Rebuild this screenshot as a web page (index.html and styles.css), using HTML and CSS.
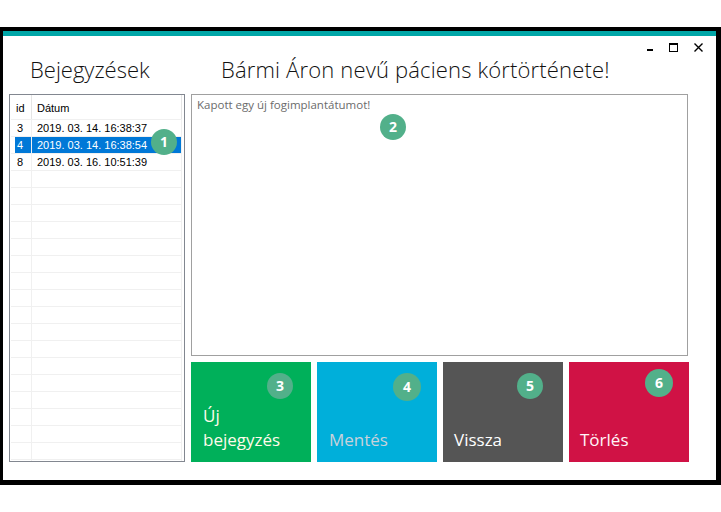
FILE: index.html
```html
<!DOCTYPE html>
<html lang="hu">
<head>
<meta charset="utf-8">
<title>Kórtörténet</title>
<link rel="stylesheet" href="styles.css">
</head>
<body>
<div class="window">
  <div class="stripe"></div>
  <div class="titlebar">
    <span class="ctl ctl-min"></span>
    <span class="ctl ctl-max"></span>
    <svg class="ctl ctl-close" width="9" height="9" viewBox="0 0 9 9"><path d="M0.5 0.5 L8.5 8.5 M8.5 0.5 L0.5 8.5" stroke="#000" stroke-width="1.4" fill="none"/></svg>
  </div>
  <div class="headings">
    <h1 class="heading heading-left">Bejegyzések</h1>
    <h1 class="heading heading-right">Bármi Áron nevű páciens kórtörténete!</h1>
  </div>
  <div class="main">
    <div class="list">
      <div class="row row-head"><div class="c-id">id</div><div class="c-date">Dátum</div></div>
      <div class="row"><div class="c-id">3</div><div class="c-date">2019. 03. 14. 16:38:37</div></div>
      <div class="row row-sel"><div class="c-id">4</div><div class="c-date">2019. 03. 14. 16:38:54</div></div>
      <div class="row"><div class="c-id">8</div><div class="c-date">2019. 03. 16. 10:51:39</div></div>
      <div class="row"><div class="c-id"></div><div class="c-date"></div></div>
      <div class="row"><div class="c-id"></div><div class="c-date"></div></div>
      <div class="row"><div class="c-id"></div><div class="c-date"></div></div>
      <div class="row"><div class="c-id"></div><div class="c-date"></div></div>
      <div class="row"><div class="c-id"></div><div class="c-date"></div></div>
      <div class="row"><div class="c-id"></div><div class="c-date"></div></div>
      <div class="row"><div class="c-id"></div><div class="c-date"></div></div>
      <div class="row"><div class="c-id"></div><div class="c-date"></div></div>
      <div class="row"><div class="c-id"></div><div class="c-date"></div></div>
      <div class="row"><div class="c-id"></div><div class="c-date"></div></div>
      <div class="row"><div class="c-id"></div><div class="c-date"></div></div>
      <div class="row"><div class="c-id"></div><div class="c-date"></div></div>
      <div class="row"><div class="c-id"></div><div class="c-date"></div></div>
      <div class="row"><div class="c-id"></div><div class="c-date"></div></div>
      <div class="row"><div class="c-id"></div><div class="c-date"></div></div>
      <div class="row"><div class="c-id"></div><div class="c-date"></div></div>
      <div class="row"><div class="c-id"></div><div class="c-date"></div></div>
      <div class="row"><div class="c-id"></div><div class="c-date"></div></div>
      <span class="badge badge-1">1</span>
    </div>
    <div class="right">
      <div class="textbox">Kapott egy új fogimplantátumot!<span class="badge badge-2">2</span></div>
      <div class="buttons">
        <div class="btn btn-new"><span class="btn-label">Új<br>bejegyzés</span><span class="badge badge-3">3</span></div>
        <div class="btn btn-save"><span class="btn-label">Mentés</span><span class="badge badge-big badge-4">4</span></div>
        <div class="btn btn-back"><span class="btn-label">Vissza</span><span class="badge badge-5">5</span></div>
        <div class="btn btn-del"><span class="btn-label">Törlés</span><span class="badge badge-big badge-6">6</span></div>
      </div>
    </div>
  </div>
</div>
</body>
</html>
```
FILE: styles.css
```css
html, body {
  margin: 0;
  padding: 0;
  background: #ffffff;
}
body {
  width: 721px;
  height: 512px;
  overflow: hidden;
  font-family: "Open Sans", "Noto Sans", sans-serif;
}
.window {
  margin-top: 27px;
  box-sizing: border-box;
  width: 721px;
  height: 458px;
  border-style: solid;
  border-color: #000;
  border-width: 4px 5px 5px 3px;
  background: #fff;
}
.stripe {
  height: 5px;
  background: #00a6a7;
}
.titlebar {
  height: 17px;
  box-sizing: border-box;
  padding-top: 7px;
  padding-right: 13px;
  display: flex;
  justify-content: flex-end;
  align-items: flex-start;
  gap: 16px;
}
.ctl {
  display: block;
  box-sizing: border-box;
}
.ctl-min {
  width: 6px;
  height: 8px;
  border-bottom: 2px solid #000;
}
.ctl-max {
  width: 9px;
  height: 9px;
  border: 1px solid #000;
  border-top-width: 2px;
}
.ctl-close {
  width: 9px;
  height: 9px;
}
.headings {
  height: 41px;
  padding-left: 6px;
  display: grid;
  grid-template-columns: 176px 498px;
  column-gap: 6px;
}
.heading {
  margin: 0;
  padding-top: 1px;
  font-weight: 300;
  font-size: 22px;
  line-height: 30px;
  color: #111;
  white-space: nowrap;
}
.heading-left { padding-left: 21px; }
.heading-right {
  padding-left: 30px;
  letter-spacing: 0.16px;
}
.main {
  margin-left: 6px;
  height: 368px;
  display: flex;
  gap: 6px;
}
.list {
  position: relative;
  box-sizing: border-box;
  width: 176px;
  height: 368px;
  border: 1px solid #828790;
  padding: 0 2px 0 1px;
  overflow: hidden;
  font-family: "Liberation Sans", Arial, sans-serif;
  font-size: 11px;
  color: #000;
}
.row {
  display: flex;
  box-sizing: border-box;
  height: 17px;
  border-bottom: 1px solid #f0f0f0;
}
.row-head {
  height: 25px;
  align-items: stretch;
}
.c-id, .c-date {
  box-sizing: border-box;
  border-right: 1px solid #f0f0f0;
  padding-top: 1px;
  line-height: 15px;
  white-space: nowrap;
}
.c-id {
  width: 21px;
  padding-left: 6px;
}
.c-date {
  width: 150px;
  padding-left: 5px;
}
.row-head .c-id, .row-head .c-date {
  padding-top: 6px;
  border-right-color: #e5e5e5;
}
.row-head .c-id { padding-left: 5px; }
.row-sel .c-id {
  background: linear-gradient(to right, transparent 4px, #0078d7 4px);
  color: #fff;
}
.row-sel .c-date {
  background: #0078d7;
  color: #fff;
}
.right {
  width: 498px;
  display: flex;
  flex-direction: column;
  gap: 6px;
}
.textbox {
  position: relative;
  box-sizing: border-box;
  width: 497px;
  height: 262px;
  border: 1px solid #a0a0a0;
  padding: 2px 5px;
  font-size: 11.5px;
  line-height: 16px;
  color: #6b6b6b;
}
.buttons {
  display: grid;
  grid-template-columns: repeat(4, 120px);
  column-gap: 6px;
  height: 100px;
}
.btn {
  position: relative;
  display: flex;
  flex-direction: column;
  justify-content: flex-end;
  box-sizing: border-box;
  padding: 0 11px 10px 11px;
  font-size: 17px;
  line-height: 24px;
}
.btn-new { background: #00b05a; color: #fffbea; padding-left: 12px; }
.btn-save { background: #00afda; color: #c9d2da; padding-left: 12px; }
.btn-back { background: #555555; color: #ffffff; }
.btn-del { background: #d01245; color: #fff6f8; }
.badge {
  position: absolute;
  width: 26px;
  height: 26px;
  border-radius: 50%;
  background: #52b08a;
  color: #fff;
  font-family: "Open Sans", "Noto Sans", sans-serif;
  font-weight: 700;
  font-size: 14px;
  line-height: 26px;
  text-align: center;
}
.badge-big {
  width: 28px;
  height: 28px;
  line-height: 28px;
}
.badge-1 { left: 141px; top: 34px; }
.badge-2 { left: 188px; top: 19px; }
.badge-3 { left: 76px; top: 11px; }
.badge-4 { left: 76px; top: 11px; }
.badge-5 { left: 74px; top: 11px; }
.badge-6 { left: 76px; top: 7px; }
```
